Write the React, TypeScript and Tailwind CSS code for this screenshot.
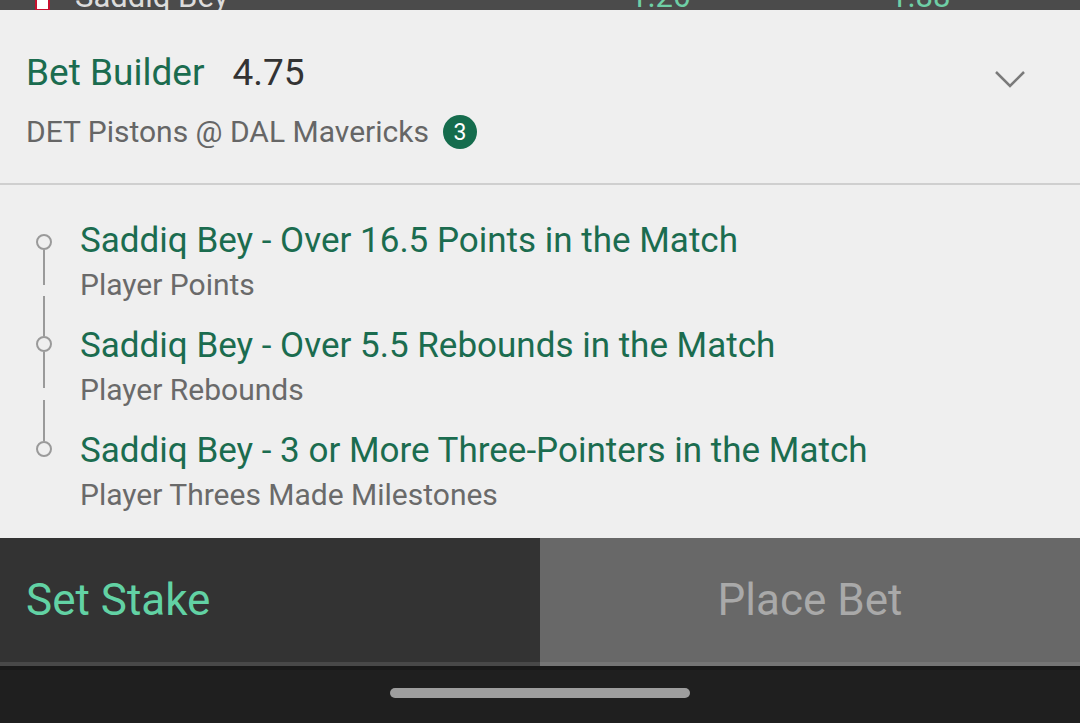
import React from 'react';

const selections = [
  { title: 'Saddiq Bey - Over 16.5 Points in the Match', market: 'Player Points' },
  { title: 'Saddiq Bey - Over 5.5 Rebounds in the Match', market: 'Player Rebounds' },
  { title: 'Saddiq Bey - 3 or More Three-Pointers in the Match', market: 'Player Threes Made Milestones' },
];

const Dot = () => <div className="h-4 w-4 shrink-0 rounded-full border-2 border-[#9a9a9a] bg-[#efefef]" />;
const Line = ({ h }: { h: string }) => <div className={`w-[2px] bg-[#9a9a9a] ${h}`} />;

export default function App() {
  return (
    <div className="flex h-[723px] w-[1080px] flex-col overflow-hidden bg-[#efefef] font-['Roboto',sans-serif]">
      {/* market row behind the slip, mostly hidden */}
      <div className="h-[10px] shrink-0 overflow-hidden bg-[#4b4b4b]">
        <div className="-mt-[28px] flex h-[48px] items-center text-[31px] leading-none">
          <div className="ml-[35px] h-[30px] w-[15px] border-2 border-[#c8102e] bg-white" />
          <span className="ml-[25px] w-[357px] text-[#dcdcdc]">Saddiq Bey</span>
          <div className="mt-[34px] h-[6px] w-[2px] bg-[#8fd8b8]" />
          <span className="ml-[196px] w-[260px] text-[#6fcfa6]">1.26</span>
          <span className="text-[#6fcfa6]">1.88</span>
        </div>
      </div>

      {/* header */}
      <div className="flex shrink-0 items-start justify-between border-b-2 border-[#cfcfcf] pb-[31px] pl-[26px] pr-[54px] pt-[39px]">
        <div className="flex flex-col gap-[15px]">
          <div className="flex items-center text-[37px] leading-[48px]">
            <span className="text-[#1b6c4f]">Bet Builder</span>
            <span className="ml-[28px] text-[#333333]">4.75</span>
          </div>
          <div className="flex items-center text-[30px] leading-[40px] text-[#666666]">
            <span>DET Pistons @ DAL Mavericks</span>
            <span className="ml-[14px] flex h-[34px] w-[34px] items-center justify-center rounded-full bg-[#156c4d] text-[23px] leading-none text-white">
              3
            </span>
          </div>
        </div>
        <svg className="mt-[20px]" width="32" height="20" viewBox="0 0 32 20" fill="none">
          <path d="M2 3 L16 17 L30 3" stroke="#7a7a7a" strokeWidth="2.5" />
        </svg>
      </div>

      {/* selections with timeline rail */}
      <div className="flex flex-1 pl-[36px]">
        <div className="flex w-4 flex-col items-center pt-[49px]">
          <Dot />
          <Line h="h-[35px]" />
          <div className="h-[11px]" />
          <Line h="h-[40px]" />
          <Dot />
          <Line h="h-[36px]" />
          <div className="h-[12px]" />
          <Line h="h-[41px]" />
          <Dot />
        </div>
        <div className="ml-[28px] flex flex-col gap-[17px] pt-[34px]">
          {selections.map((s) => (
            <div key={s.title} className="flex flex-col">
              <span className="text-[35px] leading-[44px] text-[#1b6c4f]">{s.title}</span>
              <span className="text-[30px] leading-[44px] text-[#6a6a6a]">{s.market}</span>
            </div>
          ))}
        </div>
      </div>

      {/* actions */}
      <div className="flex h-[128px] shrink-0">
        <button className="flex w-1/2 items-center border-b-4 border-[#484848] bg-[#333333] pl-[26px] text-[44px] text-[#62d2a4]">
          Set Stake
        </button>
        <button className="flex w-1/2 items-center justify-center border-b-4 border-[#757575] bg-[#686868] text-[44px] text-[#a9a9a9]">
          Place Bet
        </button>
      </div>

      {/* system nav */}
      <div className="flex h-[57px] shrink-0 items-start justify-center border-t-4 border-[#191919] bg-[#1f1f1f] pt-[18px]">
        <div className="h-[10px] w-[300px] rounded-full bg-[#9e9e9e]" />
      </div>
    </div>
  );
}
